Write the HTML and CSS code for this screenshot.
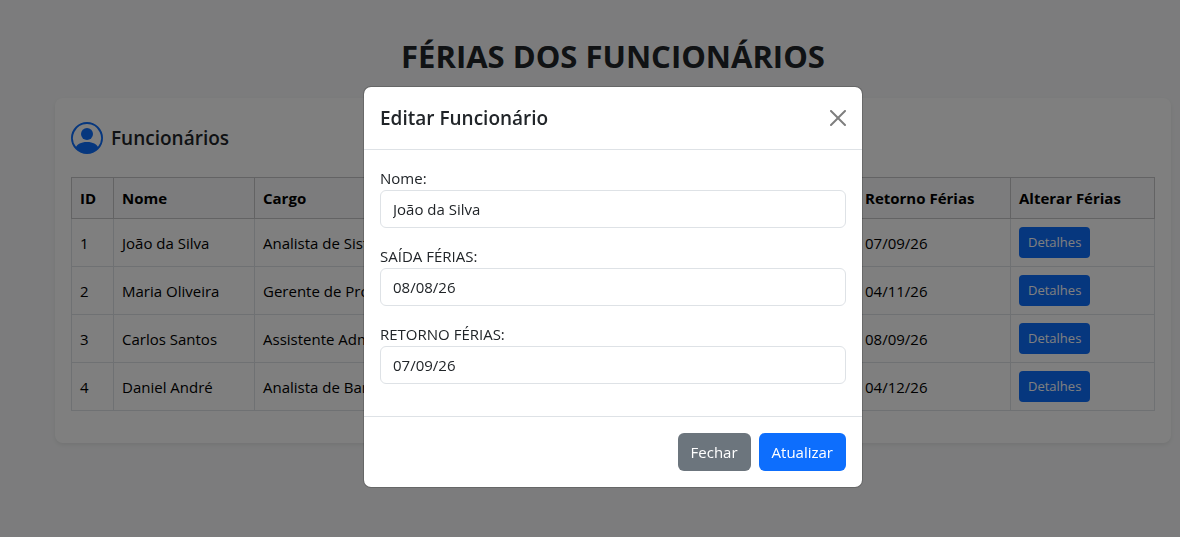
FILE: index.html
```html
<!DOCTYPE html>
<html lang="pt-BR">
<head>
  <meta charset="utf-8">
  <meta name="viewport" content="width=device-width, initial-scale=1">
  <title>Férias dos Funcionários</title>
  <link rel="stylesheet" href="styles.css">
</head>
<body>
  <main class="page">
    <h1 class="page-title">FÉRIAS DOS FUNCIONÁRIOS</h1>
    <section class="card">
      <header class="card-header">
        <svg class="card-icon" viewBox="0 0 16 16" fill="currentColor" aria-hidden="true">
          <path d="M11 6a3 3 0 1 1-6 0 3 3 0 0 1 6 0"/>
          <path fill-rule="evenodd" d="M0 8a8 8 0 1 1 16 0A8 8 0 0 1 0 8m8-7a7 7 0 0 0-5.468 11.37C3.242 11.226 4.805 10 8 10s4.757 1.225 5.468 2.37A7 7 0 0 0 8 1"/>
        </svg>
        <h2 class="card-title">Funcionários</h2>
      </header>
      <table class="table">
        <colgroup>
          <col class="col-id"><col class="col-name"><col><col class="col-date"><col class="col-return"><col class="col-action">
        </colgroup>
        <thead>
          <tr><th scope="col">ID</th><th scope="col">Nome</th><th scope="col">Cargo</th><th scope="col">Saída Férias</th><th scope="col">Retorno Férias</th><th scope="col">Alterar Férias</th></tr>
        </thead>
        <tbody>
          <tr><td>1</td><td>João da Silva</td><td>Analista de Sistemas</td><td>08/08/26</td><td>07/09/26</td><td><button class="btn btn-small btn-primary" type="button">Detalhes</button></td></tr>
          <tr><td>2</td><td>Maria Oliveira</td><td>Gerente de Projetos</td><td>05/10/26</td><td>04/11/26</td><td><button class="btn btn-small btn-primary" type="button">Detalhes</button></td></tr>
          <tr><td>3</td><td>Carlos Santos</td><td>Assistente Adm.</td><td>09/08/26</td><td>08/09/26</td><td><button class="btn btn-small btn-primary" type="button">Detalhes</button></td></tr>
          <tr><td>4</td><td>Daniel André</td><td>Analista de Banco de Dados</td><td>04/11/26</td><td>04/12/26</td><td><button class="btn btn-small btn-primary" type="button">Detalhes</button></td></tr>
        </tbody>
      </table>
    </section>
  </main>

  <div class="backdrop">
    <form class="modal" role="dialog" aria-modal="true" aria-labelledby="modal-title">
      <header class="modal-header">
        <h2 class="modal-title" id="modal-title">Editar Funcionário</h2>
        <button class="close" type="button" aria-label="Fechar janela">
          <svg class="close-icon" viewBox="0 0 16 16" aria-hidden="true">
            <path d="M.293.293a1 1 0 0 1 1.414 0L8 6.586 14.293.293a1 1 0 1 1 1.414 1.414L9.414 8l6.293 6.293a1 1 0 0 1-1.414 1.414L8 9.414l-6.293 6.293a1 1 0 0 1-1.414-1.414L6.586 8 .293 1.707a1 1 0 0 1 0-1.414"/>
          </svg>
        </button>
      </header>
      <div class="modal-body">
        <div class="field">
          <label class="label" for="nome">Nome:</label>
          <input class="input" id="nome" type="text" value="João da Silva">
        </div>
        <div class="field">
          <label class="label" for="saida">SAÍDA FÉRIAS:</label>
          <input class="input" id="saida" type="text" value="08/08/26">
        </div>
        <div class="field">
          <label class="label" for="retorno">RETORNO FÉRIAS:</label>
          <input class="input" id="retorno" type="text" value="07/09/26">
        </div>
      </div>
      <footer class="modal-footer">
        <button class="btn btn-secondary" type="button">Fechar</button>
        <button class="btn btn-primary" type="button">Atualizar</button>
      </footer>
    </form>
  </div>
</body>
</html>
```

FILE: styles.css
```css
*,
*::before,
*::after {
  box-sizing: border-box;
}

body {
  margin: 0;
  min-height: 100vh;
  background: #f8f9fa;
  color: #212529;
  font-family: "Segoe UI", "Open Sans", "Noto Sans", sans-serif;
  font-size: 15px;
  line-height: 24px;
}

h1,
h2 {
  margin: 0;
}

.page {
  padding: 36px 9px 36px 55px;
}

.page-title {
  margin-bottom: 22px;
  font-size: 31px;
  font-weight: 700;
  line-height: 40px;
  text-align: center;
}

.card {
  padding: 24px 16px 32px;
  border-radius: 8px;
  background: #fff;
  box-shadow: 0 2px 4px rgba(0, 0, 0, 0.075);
}

.card-header {
  display: flex;
  align-items: center;
  gap: 8px;
  margin-bottom: 23px;
}

.card-icon {
  width: 32px;
  height: 32px;
  color: #0d6efd;
}

.card-title,
.modal-title {
  font-size: 19px;
  font-weight: 600;
  line-height: 30px;
}

.table {
  width: 100%;
  border-collapse: collapse;
  table-layout: fixed;
  color: #000;
}

.table th,
.table td {
  padding: 8px;
  border: 1px solid #dee2e6;
  text-align: left;
  vertical-align: middle;
  white-space: nowrap;
}

.table th {
  border-color: #c6c7c8;
  background: #f8f9fa;
  font-weight: 700;
}

.table thead {
  border: 1px solid #c6c7c8;
}

.col-id {
  width: 42px;
}

.col-name {
  width: 141px;
}

.col-date {
  width: 144px;
}

.col-return {
  width: 154px;
}

.col-action {
  width: 144px;
}

.btn {
  display: block;
  padding: 6px 12px;
  border: 1px solid transparent;
  border-radius: 6px;
  color: #fff;
  font: inherit;
  cursor: pointer;
}

.btn-small {
  padding: 4px 8px;
  border-radius: 4px;
  font-size: 13px;
  line-height: 21px;
}

.btn-primary {
  background: #0d6efd;
}

.btn-secondary {
  background: #6c757d;
}

.backdrop {
  position: fixed;
  inset: 0;
  display: flex;
  align-items: flex-start;
  justify-content: center;
  padding: 86px 0 24px 46px;
  overflow: auto;
  background: rgba(0, 0, 0, 0.5);
}

.modal {
  width: 100%;
  max-width: 500px;
  border: 1px solid rgba(0, 0, 0, 0.175);
  border-radius: 8px;
  background: #fff;
  background-clip: padding-box;
}

.modal-header {
  display: flex;
  align-items: center;
  justify-content: space-between;
  padding: 16px;
  border-bottom: 1px solid #dee2e6;
}

.close {
  display: flex;
  padding: 0;
  border: 0;
  background: none;
  opacity: 0.5;
  cursor: pointer;
}

.close-icon {
  width: 16px;
  height: 16px;
}

.modal-body {
  display: grid;
  gap: 16px;
  padding: 16px 16px 32px;
}

.label {
  display: block;
}

.input {
  display: block;
  width: 100%;
  padding: 6px 12px;
  border: 1px solid #dee2e6;
  border-radius: 6px;
  background: #fff;
  color: inherit;
  font: inherit;
}

.modal-footer {
  display: flex;
  justify-content: flex-end;
  gap: 8px;
  padding: 16px;
  border-top: 1px solid #dee2e6;
}
```
